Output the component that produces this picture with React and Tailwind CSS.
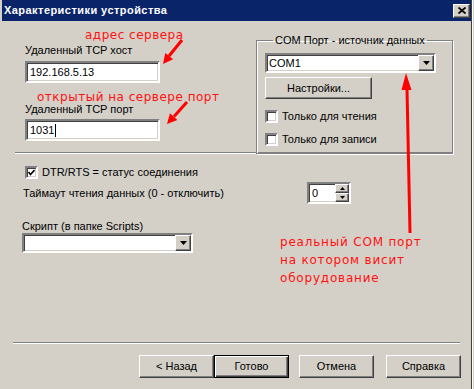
import React from "react";

const sunken =
  "border-2 border-t-[#808080] border-l-[#808080] border-b-white border-r-white shadow-[inset_1px_1px_0_#404040,inset_-1px_-1px_0_#d4d0c8] bg-white";
const raised =
  "border border-t-white border-l-white border-b-[#404040] border-r-[#404040] shadow-[inset_-1px_-1px_0_#808080,inset_1px_1px_0_#d4d0c8] bg-[#d4d0c8]";

function DropArrow() {
  return (
    <div className={`${raised} w-[16px] h-full flex items-center justify-center`}>
      <svg width="7" height="4" viewBox="0 0 7 4">
        <polygon points="0,0 7,0 3.5,4" fill="#000" />
      </svg>
    </div>
  );
}

function CheckBox({ checked, label }) {
  return (
    <div className="flex items-center gap-[4px]">
      <div className={`${sunken} w-[13px] h-[13px] flex items-center justify-center`}>
        {checked && (
          <svg width="7" height="7" viewBox="0 0 7 7">
            <polyline points="0.5,3 2.5,5.5 6.5,1" fill="none" stroke="#000" strokeWidth="1.6" />
          </svg>
        )}
      </div>
      <span className="leading-[13px]">{label}</span>
    </div>
  );
}

function Button({ children, def, className = "" }) {
  const border = def
    ? "border border-black shadow-[inset_1px_1px_0_#fff,inset_-1px_-1px_0_#404040,inset_-2px_-2px_0_#808080] bg-[#d4d0c8]"
    : raised;
  return (
    <div className={`${border} w-[75px] h-[23px] flex items-center justify-center ${className}`}>
      {children}
    </div>
  );
}

export default function App() {
  return (
    <div className="relative w-[474px] h-[389px] overflow-hidden bg-[#d4d0c8] text-[11px] text-black font-['Liberation_Sans',Arial,sans-serif] flex">
      {/* dialog window */}
      <div className="w-[472px] h-full pl-[2px] border-r border-r-[#404040] flex flex-col">
        {/* title bar */}
        <div className="h-[21px] bg-[#0a246a] flex items-center pl-[2px] pr-[1px]">
          <span className="text-white font-bold text-[11px] tracking-[0.45px]">Характеристики устройства</span>
          <div className={`${raised} ml-auto w-[17px] h-[14px] flex items-center justify-center`}>
            <svg width="8" height="7" viewBox="0 0 8 7">
              <path d="M0.5 0.5 L7.5 6.5 M7.5 0.5 L0.5 6.5" stroke="#000" strokeWidth="1.7" />
            </svg>
          </div>
        </div>

        {/* top section */}
        <div className="ml-[13px] w-[438px] h-[132px] border-b border-b-[#808080] shadow-[0_1px_0_#fff] flex">
          <div className="pl-[10px] w-[145px] pt-[23px]">
            <div className="leading-[13px]">Удаленный TCP хост</div>
            <div className={`${sunken} mt-[4px] w-[135px] h-[22px] flex items-center pl-[3px]`}>192.168.5.13</div>
            <div className="leading-[13px] mt-[20px]">Удаленный TCP порт</div>
            <div className={`${sunken} mt-[3px] w-[135px] h-[22px] flex items-center pl-[3px]`}>
              1031<span className="w-px h-[13px] bg-black ml-px" />
            </div>
          </div>

          <fieldset className="ml-auto mt-[13px] w-[197px] h-[120px] border border-[#808080] shadow-[inset_1px_1px_0_#fff,1px_1px_0_#fff] px-[8px]">
            <legend className="ml-[8px] px-[2px] leading-[13px]">COM Порт - источник данных</legend>
            <div className={`${sunken} mt-[6px] w-[171px] h-[20px] flex items-center`}>
              <span className="pl-[2px] flex-1">COM1</span>
              <DropArrow />
            </div>
            <Button className="mt-[4px] !w-[107px] !h-[22px]">Настройки...</Button>
            <div className="mt-[11px]">
              <CheckBox label="Только для чтения" />
            </div>
            <div className="mt-[10px]">
              <CheckBox label="Только для записи" />
            </div>
          </fieldset>
        </div>

        {/* middle options */}
        <div className="pl-[23px] pt-[13px]">
          <CheckBox checked label="DTR/RTS = статус соединения" />
          <div className="mt-[3px] flex items-center h-[22px] -ml-[2px]">
            <span className="w-[284px]">Таймаут чтения данных (0 - отключить)</span>
            <div className={`${sunken} w-[44px] h-[22px] flex`}>
              <span className="flex-1 pl-[3px] leading-[18px]">0</span>
              <div className="w-[14px] flex flex-col">
                <div className={`${raised} flex-1 flex items-center justify-center`}>
                  <svg width="5" height="3" viewBox="0 0 5 3"><polygon points="2.5,0 5,3 0,3" fill="#000" /></svg>
                </div>
                <div className={`${raised} flex-1 flex items-center justify-center`}>
                  <svg width="5" height="3" viewBox="0 0 5 3"><polygon points="0,0 5,0 2.5,3" fill="#000" /></svg>
                </div>
              </div>
            </div>
          </div>
          <div className="-ml-[3px] mt-[16px] leading-[13px]">Скрипт (в папке Scripts)</div>
          <div className={`${sunken} -ml-[3px] w-[171px] h-[20px] flex justify-end`}>
            <DropArrow />
          </div>
        </div>

        {/* bottom buttons */}
        <div className="mt-auto pb-[11px]">
          <div className="ml-[11px] w-[447px] border-b border-b-[#808080] shadow-[0_1px_0_#fff]" />
          <div className="mt-[12px] pl-[137px] flex">
            <Button>&lt; Назад</Button>
            <Button def>Готово</Button>
            <Button className="ml-[10px]">Отмена</Button>
            <Button className="ml-[12px]">Справка</Button>
          </div>
        </div>
      </div>
      <div className="flex-1 border-l border-l-white" />

      {/* red annotations */}
      <div className="absolute left-[85px] top-[28px] text-[12px] leading-[14px] tracking-[0.5px] text-[#ff1010] font-['DejaVu_Sans',sans-serif]">
        адрес сервера
      </div>
      <div className="absolute left-[37px] top-[90px] text-[12px] leading-[14px] tracking-[0.5px] text-[#ff1010] font-['DejaVu_Sans',sans-serif]">
        открытый на сервере порт
      </div>
      <div className="absolute left-[280px] top-[233px] text-[12px] leading-[18px] tracking-[0.8px] text-[#ff1010] font-['DejaVu_Sans',sans-serif]">
        <div>реальный COM порт</div>
        <div>на котором висит</div>
        <div>оборудование</div>
      </div>
      <svg className="absolute inset-0 pointer-events-none" width="474" height="389" viewBox="0 0 474 389">
        <line x1="182" y1="40" x2="169" y2="56" stroke="#ff0000" strokeWidth="3" />
        <polygon points="163,64 173.1,59.3 165.3,53.1" fill="#ff0000" />
        <line x1="187" y1="102" x2="174" y2="116.5" stroke="#ff0000" strokeWidth="3" />
        <polygon points="167,124 177.4,120 170,113.2" fill="#ff0000" />
        <line x1="410" y1="233" x2="407" y2="89" stroke="#ff0000" strokeWidth="3" />
        <polygon points="406,73 411.5,90 401.5,90" fill="#ff0000" />
      </svg>
    </div>
  );
}
